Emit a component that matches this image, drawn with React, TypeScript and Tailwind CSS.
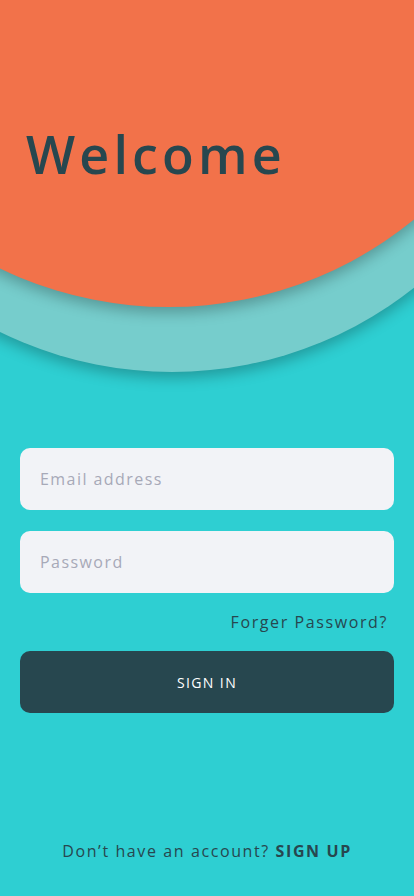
import React from 'react';

const font = { fontFamily: '"Open Sans", "Liberation Sans", sans-serif' };

const Backdrop: React.FC = () => (
  <>
    {/* light ring behind */}
    <div className="absolute left-[-218px] top-[-408px] h-[780px] w-[780px] rounded-full bg-[#76CDCC] shadow-[0_6px_14px_rgba(0,0,0,0.25)]" />
    {/* orange disc */}
    <div className="absolute left-[-220px] top-[-470px] h-[777px] w-[777px] rounded-full bg-[#F2724A] shadow-[0_6px_14px_rgba(0,0,0,0.25)]" />
  </>
);

const Field: React.FC<{ placeholder: string; type?: string }> = ({ placeholder, type = 'text' }) => (
  <input
    type={type}
    placeholder={placeholder}
    className="h-[62px] w-full rounded-[10px] bg-[#F2F3F7] px-5 text-[16px] tracking-[0.09em] text-[#27474F] placeholder:text-[#A7A9B8] outline-none"
    style={font}
  />
);

export default function App() {
  return (
    <div className="relative min-h-[896px] w-full overflow-hidden bg-[#2ECFD2]" style={font}>
      <Backdrop />
      <div className="relative flex min-h-[896px] flex-col px-5">
        <h1 className="ml-[6px] mt-[122px] text-[52px] font-semibold leading-[64px] tracking-[0.08em] text-[#27474F]">
          Welcome
        </h1>

        <div className="mt-[262px] flex flex-col">
          <Field placeholder="Email address" />
          <div className="mt-[21px]">
            <Field placeholder="Password" type="password" />
          </div>
          <div className="mt-[17px] flex justify-end pr-[6px]">
            <span className="text-[16px] leading-[24px] tracking-[0.1em] text-[#27474F]">Forger Password?</span>
          </div>
          <button className="mt-[17px] h-[62px] w-full rounded-[10px] bg-[#27474F] text-[14px] tracking-[0.1em] text-white">
            SIGN IN
          </button>
        </div>

        <div className="mt-auto pb-[33px] text-center text-[16px] leading-[24px] tracking-[0.1em] text-[#27474F]">
          Don’t have an account? <span className="font-bold">SIGN UP</span>
        </div>
      </div>
    </div>
  );
}
